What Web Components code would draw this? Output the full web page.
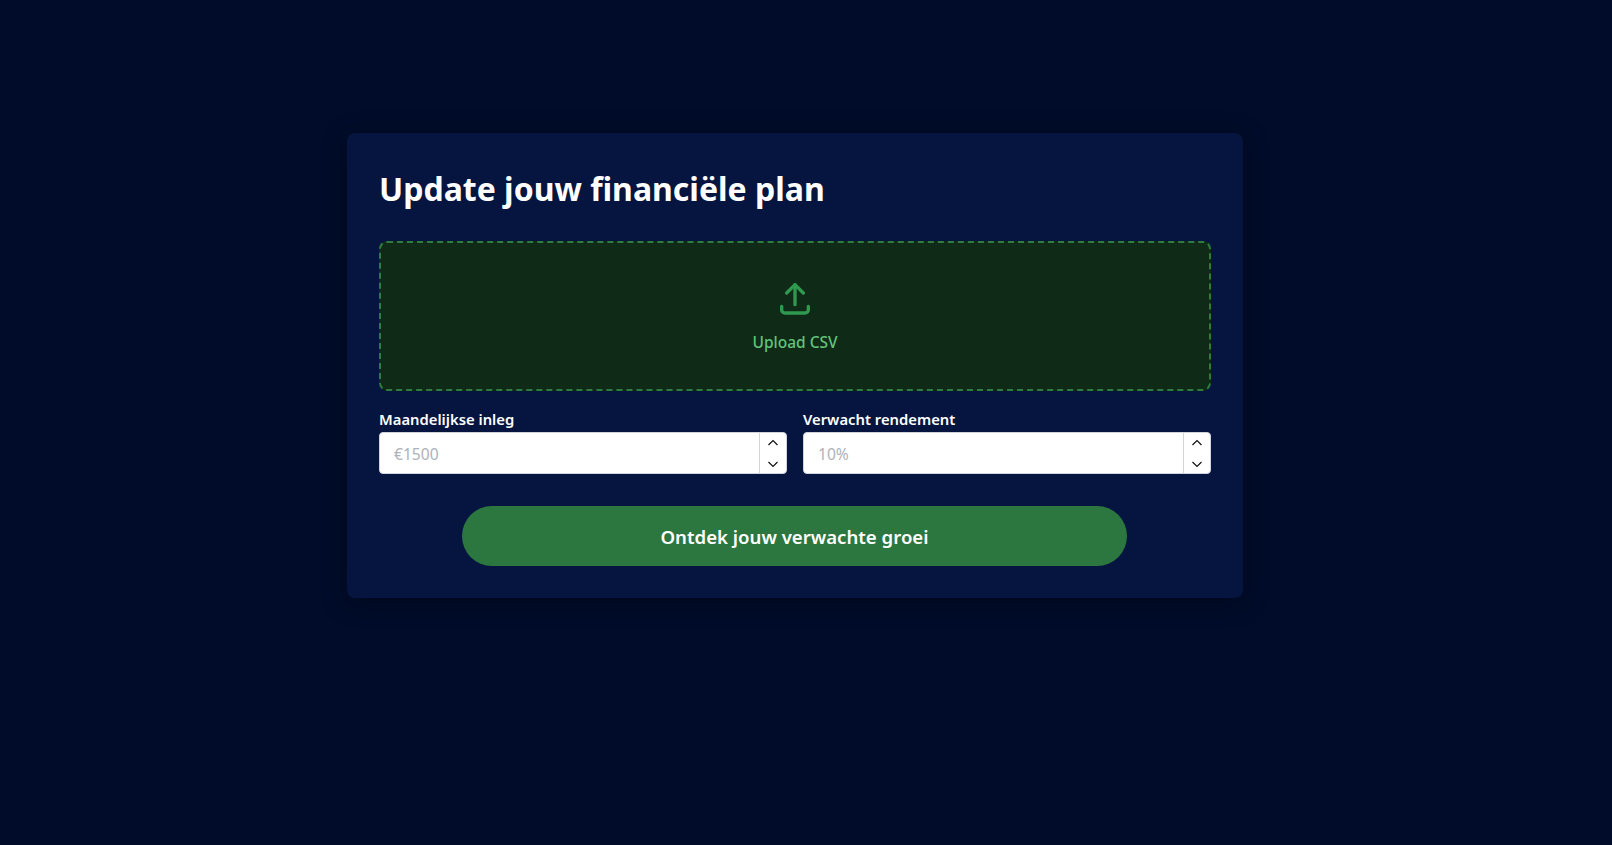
<!doctype html>
<html lang="nl">
<head>
<meta charset="utf-8">
<title>Update jouw financiële plan</title>
<style>
  html, body { margin: 0; height: 100%; background: #000c2a; }
  body { font-family: "Noto Sans", "Open Sans", sans-serif; }
</style>
</head>
<body>
<plan-page>
  <plan-card heading="Update jouw financiële plan">
    <csv-upload label="Upload CSV"></csv-upload>
    <div slot="fields">
      <number-field label="Maandelijkse inleg" placeholder="€1500"></number-field>
      <number-field label="Verwacht rendement" placeholder="10%"></number-field>
    </div>
    <pill-button slot="action">Ontdek jouw verwachte groei</pill-button>
  </plan-card>
</plan-page>
<script>
const html = String.raw;

class PlanPage extends HTMLElement {
  constructor() {
    super();
    this.attachShadow({ mode: "open" });
    this.shadowRoot.innerHTML = html`
      <style>
        :host {
          display: flex;
          justify-content: center;
          box-sizing: border-box;
          min-height: 845px;
          padding: 133px 22px 0 0;
          background: #000c2a;
        }
      </style>
      <slot></slot>
    `;
  }
}
customElements.define("plan-page", PlanPage);

class PlanCard extends HTMLElement {
  constructor() {
    super();
    this.attachShadow({ mode: "open" });
    this.shadowRoot.innerHTML = html`
      <style>
        :host {
          display: block;
          box-sizing: border-box;
          width: 896px;
          height: 465px;
          padding: 32px;
          background: #05153f;
          border-radius: 8px;
          box-shadow: 0 4px 24px rgba(0, 0, 0, 0.35);
        }
        h1 {
          margin: 0 0 28px;
          font-size: 32px;
          line-height: 48px;
          font-weight: 700;
          color: #fff;
        }
        .fields ::slotted(div) {
          display: grid;
          grid-template-columns: 1fr 1fr;
          gap: 16px;
        }
        .fields { margin-top: 16px; }
        .action { display: flex; justify-content: center; margin-top: 32px; }
      </style>
      <h1></h1>
      <slot></slot>
      <div class="fields"><slot name="fields"></slot></div>
      <div class="action"><slot name="action"></slot></div>
    `;
  }
  connectedCallback() {
    this.shadowRoot.querySelector("h1").textContent = this.getAttribute("heading");
  }
}
customElements.define("plan-card", PlanCard);

class CsvUpload extends HTMLElement {
  constructor() {
    super();
    this.attachShadow({ mode: "open" });
    this.shadowRoot.innerHTML = html`
      <style>
        :host {
          display: flex;
          flex-direction: column;
          align-items: center;
          justify-content: center;
          box-sizing: border-box;
          height: 150px;
          background: #102a18;
          border: 2px dashed #2e7d3e;
          border-radius: 8px;
          cursor: pointer;
        }
        svg { display: block; width: 40px; height: 40px; margin-bottom: 12px; color: #2f9a4f; }
        span { font-size: 15.5px; line-height: 24px; font-weight: 500; color: #62c47a; }
      </style>
      <svg viewBox="0 0 24 24" fill="none" stroke="currentColor" stroke-width="2" stroke-linecap="round" stroke-linejoin="round">
        <path d="M4 17v2a2 2 0 0 0 2 2h12a2 2 0 0 0 2-2v-2"/>
        <path d="M7 9l5-5 5 5"/>
        <path d="M12 4v12"/>
      </svg>
      <span></span>
    `;
  }
  connectedCallback() {
    this.shadowRoot.querySelector("span").textContent = this.getAttribute("label");
  }
}
customElements.define("csv-upload", CsvUpload);

class NumberField extends HTMLElement {
  constructor() {
    super();
    this.attachShadow({ mode: "open" });
    this.shadowRoot.innerHTML = html`
      <style>
        :host { display: block; }
        label {
          display: block;
          margin-bottom: 1px;
          font-size: 14.8px;
          line-height: 24px;
          font-weight: 600;
          color: #fff;
        }
        .box {
          display: flex;
          box-sizing: border-box;
          height: 42px;
          background: #fff;
          border: 1px solid #d1d5db;
          border-radius: 4px;
          overflow: hidden;
        }
        input {
          flex: 1;
          min-width: 0;
          border: 0;
          outline: 0;
          padding: 2px 14px 0;
          background: transparent;
          font: inherit;
          font-size: 15.6px;
        }
        input::placeholder { color: #adb2ba; opacity: 1; }
        .spin {
          display: flex;
          flex-direction: column;
          justify-content: space-between;
          align-items: center;
          width: 27px;
          padding: 5px 1px 4px 0;
          box-sizing: border-box;
          border-left: 1px solid #d1d5db;
        }
        svg { display: block; width: 12px; height: 10px; }
      </style>
      <label></label>
      <div class="box">
        <input type="text" inputmode="numeric">
        <div class="spin">
          <svg viewBox="0 0 12 10" fill="none" stroke="#111" stroke-width="1.2"><path d="M1.5 7 6 2.5 10.5 7"/></svg>
          <svg viewBox="0 0 12 10" fill="none" stroke="#111" stroke-width="1.2"><path d="M1.5 3 6 7.5 10.5 3"/></svg>
        </div>
      </div>
    `;
  }
  connectedCallback() {
    this.shadowRoot.querySelector("label").textContent = this.getAttribute("label");
    this.shadowRoot.querySelector("input").placeholder = this.getAttribute("placeholder");
  }
}
customElements.define("number-field", NumberField);

class PillButton extends HTMLElement {
  constructor() {
    super();
    this.attachShadow({ mode: "open" });
    this.shadowRoot.innerHTML = html`
      <style>
        :host { display: block; width: 665px; margin-right: 1px; }
        button {
          display: block;
          width: 100%;
          height: 60px;
          border: 0;
          border-radius: 30px;
          background: #2c7740;
          color: #fff;
          font: inherit;
          font-size: 18.6px;
          font-weight: 600;
          cursor: pointer;
        }
      </style>
      <button><slot></slot></button>
    `;
  }
}
customElements.define("pill-button", PillButton);
</script>
</body>
</html>
